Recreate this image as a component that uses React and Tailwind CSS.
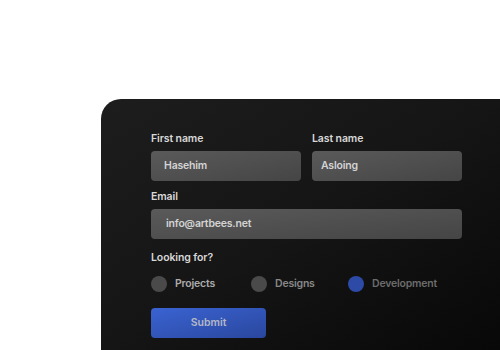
import React, { useState } from 'react';

const font = { fontFamily: 'Inter, "Noto Sans", sans-serif' };

const Field = ({ label, value, pad = 'pl-[13px]', className = '' }) => (
  <div className={`flex flex-col ${className}`}>
    <label className="text-[10.5px] tracking-[-0.1px] font-semibold leading-[14px] text-[#d8d8d8] mb-[5px]">{label}</label>
    <div className={`h-[30px] rounded-[4px] bg-gradient-to-br from-[#5a5a5a] to-[#454545] flex items-center ${pad} text-[10.5px] tracking-[-0.2px] font-semibold text-[#d4d4d4]`}>
      {value}
    </div>
  </div>
);

const Radio = ({ label, active, labelColor, width }) => (
  <div className={`flex items-center gap-[8px] ${width}`}>
    <span className={`w-[16px] h-[16px] rounded-full ${active ? 'bg-[#2c4aa6]' : 'bg-[#4a4a4a]'}`} />
    <span className={`text-[10.5px] tracking-[-0.2px] font-semibold ${labelColor}`}>{label}</span>
  </div>
);

export default function App() {
  const [choice] = useState('development');

  return (
    <div className="w-[500px] h-[350px] bg-white overflow-hidden pt-[99px] pl-[101px]" style={font}>
      <div className="w-full h-full rounded-tl-[20px] bg-gradient-to-br from-[#1d1d1d] via-[#151515] to-[#080808] pl-[50px] pt-[33px]">
        <div className="w-[311px]">
          <div className="flex gap-[11px]">
            <Field label="First name" value="Hasehim" className="w-[150px]" />
            <Field label="Last name" value="Asloing" pad="pl-[9px]" className="w-[150px]" />
          </div>

          <div className="mt-[9px]">
            <Field label="Email" value="info@artbees.net" pad="pl-[15px]" />
          </div>

          <div className="mt-[12px] text-[10.5px] tracking-[-0.1px] font-semibold leading-[14px] text-[#d8d8d8]">Looking for?</div>

          <div className="flex mt-[11px]">
            <Radio label="Projects" active={choice === 'projects'} labelColor="text-[#acacac]" width="w-[100px]" />
            <Radio label="Designs" active={choice === 'designs'} labelColor="text-[#888888]" width="w-[97px]" />
            <Radio label="Development" active={choice === 'development'} labelColor="text-[#6c6c6c]" width="" />
          </div>

          <button className="mt-[16px] w-[115px] h-[30px] rounded-[4px] bg-gradient-to-br from-[#3a63d2] to-[#2a479e] text-[10.5px] font-semibold text-[#b4b8c6]">
            Submit
          </button>
        </div>
      </div>
    </div>
  );
}
